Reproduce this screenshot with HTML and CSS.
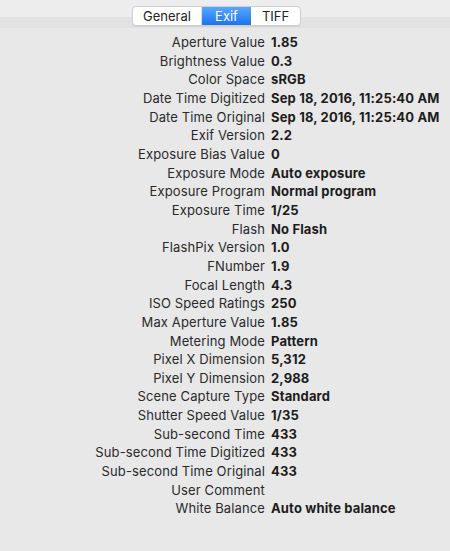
FILE: index.html
```html
<!DOCTYPE html>
<html lang="en">
<head>
    <meta charset="UTF-8">
    <meta name="viewport" content="width=device-width, initial-scale=1.0">
    <title>Exif Inspector</title>
    <link rel="stylesheet" href="styles.css">
</head>
<body>
    <div class="toolbar">
        <div class="segmented">
            <span class="segment segment-general">General</span>
            <span class="segment segment-exif active">Exif</span>
            <span class="segment segment-tiff">TIFF</span>
        </div>
    </div>

    <div class="exif-list">
        <div class="label">Aperture Value</div><div class="value">1.85</div>
        <div class="label">Brightness Value</div><div class="value">0.3</div>
        <div class="label">Color Space</div><div class="value">sRGB</div>
        <div class="label">Date Time Digitized</div><div class="value">Sep 18, 2016, 11:25:40 AM</div>
        <div class="label">Date Time Original</div><div class="value">Sep 18, 2016, 11:25:40 AM</div>
        <div class="label">Exif Version</div><div class="value">2.2</div>
        <div class="label">Exposure Bias Value</div><div class="value">0</div>
        <div class="label">Exposure Mode</div><div class="value">Auto exposure</div>
        <div class="label">Exposure Program</div><div class="value">Normal program</div>
        <div class="label">Exposure Time</div><div class="value">1/25</div>
        <div class="label">Flash</div><div class="value">No Flash</div>
        <div class="label">FlashPix Version</div><div class="value">1.0</div>
        <div class="label">FNumber</div><div class="value">1.9</div>
        <div class="label">Focal Length</div><div class="value">4.3</div>
        <div class="label">ISO Speed Ratings</div><div class="value">250</div>
        <div class="label">Max Aperture Value</div><div class="value">1.85</div>
        <div class="label">Metering Mode</div><div class="value">Pattern</div>
        <div class="label">Pixel X Dimension</div><div class="value">5,312</div>
        <div class="label">Pixel Y Dimension</div><div class="value">2,988</div>
        <div class="label">Scene Capture Type</div><div class="value">Standard</div>
        <div class="label">Shutter Speed Value</div><div class="value">1/35</div>
        <div class="label">Sub-second Time</div><div class="value">433</div>
        <div class="label">Sub-second Time Digitized</div><div class="value">433</div>
        <div class="label">Sub-second Time Original</div><div class="value">433</div>
        <div class="label">User Comment</div><div class="value"></div>
        <div class="label">White Balance</div><div class="value">Auto white balance</div>
    </div>
</body>
</html>
```

FILE: styles.css
```css
* {
    margin: 0;
    padding: 0;
    box-sizing: border-box;
}

body {
    background-color: #e8e8e8;
    font-family: Inter, 'Liberation Sans', Arial, sans-serif;
    font-size: 13px;
    color: #222;
    width: 450px;
    height: 551px;
    overflow: hidden;
}

.toolbar {
    height: 28px;
    background: linear-gradient(to bottom, #ededed 0, #ededed 17px, #e2e2e2 17px, #e2e2e2 28px);
    position: relative;
}

.segmented {
    position: absolute;
    left: 132px;
    top: 6px;
    display: flex;
    height: 20px;
    background-color: #fff;
    border: 1px solid #cfcfcf;
    border-radius: 4px;
    box-shadow: 0 1px 1px rgba(0, 0, 0, 0.08);
    overflow: hidden;
}

.segment {
    display: flex;
    align-items: center;
    justify-content: center;
    font-size: 13px;
    color: #222;
}

.segment-general {
    width: 69px;
    border-right: 1px solid #e0e0e0;
}

.segment-exif {
    width: 49px;
}

.segment-tiff {
    width: 49px;
}

.segment.active {
    background: linear-gradient(to bottom, #5aa7fc, #1a74f2);
    color: #fff;
}

.exif-list {
    display: grid;
    grid-template-columns: 265px 1fr;
    column-gap: 6px;
    padding-top: 5px;
    line-height: 18.66px;
}

.label {
    text-align: right;
    color: #2a2a2a;
    letter-spacing: 0.12px;
    white-space: nowrap;
}

.value {
    font-weight: 700;
    color: #1c1c1c;
    letter-spacing: 0.15px;
    white-space: nowrap;
}
```
